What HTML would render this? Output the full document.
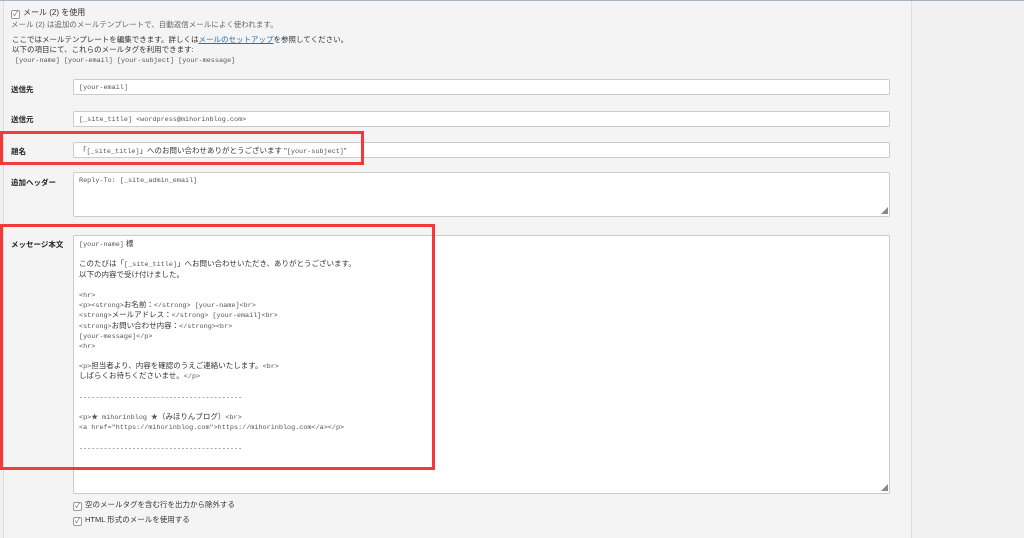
<!DOCTYPE html>
<html><head><meta charset="utf-8"><style>
*{box-sizing:border-box;margin:0;padding:0}
body{width:1024px;height:538px;overflow:hidden;background:#f1f1f1;font-family:"Liberation Sans","Noto Sans CJK JP",sans-serif;color:#333;position:relative}
.top{position:absolute;left:0;top:0;width:1024px;height:1px;background:#a8b4bf}
.panel{position:absolute;left:3px;top:1px;width:909px;height:537px;background:#f4f4f4;border-left:1px solid #ddd;border-right:1px solid #ddd}
.t{position:absolute;font-size:7.5px;white-space:nowrap;line-height:10px}
.m{font-family:"Liberation Mono","Noto Sans CJK JP",monospace;font-size:6.8px;color:#555}
.lab{position:absolute;left:11px;font-size:7.5px;font-weight:bold;color:#222}
.in{position:absolute;left:73px;width:817px;background:#fff;border:1px solid #ccc;border-radius:2px}
.in .t{left:5px}
.cb{display:inline-block;width:9px;height:9px;border:1px solid #999;border-radius:2px;background:#fff;vertical-align:-1px;margin-right:3px;font-size:7px;line-height:7px;text-align:center;color:#555}
.red{position:absolute;border:3px solid #f23a3a}
.grip{position:absolute;right:1px;bottom:1px;font-size:7px;color:#888;line-height:7px}
.ln{height:10.2px;line-height:10.2px;overflow:visible;white-space:nowrap}
a{color:#2271b1}
</style></head><body>
<div class="top"></div>
<div class="panel"></div>
<div class="t" style="left:11px;top:8px;font-size:8px"><span class="cb">✓</span>メール (2) を使用</div>
<div class="t" style="left:11px;top:20px;color:#666">メール (2) は追加のメールテンプレートで、自動返信メールによく使われます。</div>
<div class="t" style="left:12px;top:35px">ここではメールテンプレートを編集できます。詳しくは<a><u>メールのセットアップ</u></a>を参照してください。</div>
<div class="t" style="left:12px;top:45px">以下の項目にて、これらのメールタグを利用できます:</div>
<div class="t m" style="left:15px;top:56px">[your-name] [your-email] [your-subject] [your-message]</div>

<div class="lab" style="top:84px">送信先</div>
<div class="in" style="top:79px;height:16px"><div class="t m" style="top:3px">[your-email]</div></div>
<div class="lab" style="top:114px">送信元</div>
<div class="in" style="top:111px;height:16px"><div class="t m" style="top:3px">[_site_title] &lt;wordpress@mihorinblog.com&gt;</div></div>
<div class="lab" style="top:146px">題名</div>
<div class="in" style="top:142px;height:16px"><div class="t" style="top:3px;font-size:7.5px">「<span class="m">[_site_title]</span>」へのお問い合わせありがとうございます "<span class="m">[your-subject]</span>"</div></div>
<div class="lab" style="top:177px">追加ヘッダー</div>
<div class="in" style="top:172px;height:45px"><div class="t m" style="top:3px">Reply-To: [_site_admin_email]</div><div class="grip">◢</div></div>
<div class="lab" style="top:239px">メッセージ本文</div>
<div class="in" style="top:235px;height:259px"><div class="grip">◢</div>
<div class="t" style="top:3px;font-size:7.5px">
<div class="ln"><span class="m">[your-name]</span> 様</div>
<div class="ln"></div>
<div class="ln">このたびは「<span class="m">[_site_title]</span>」へお問い合わせいただき、ありがとうございます。</div>
<div class="ln">以下の内容で受け付けました。</div>
<div class="ln"></div>
<div class="ln"><span class="m">&lt;hr&gt;</span></div>
<div class="ln"><span class="m">&lt;p&gt;&lt;strong&gt;</span>お名前：<span class="m">&lt;/strong&gt; [your-name]&lt;br&gt;</span></div>
<div class="ln"><span class="m">&lt;strong&gt;</span>メールアドレス：<span class="m">&lt;/strong&gt; [your-email]&lt;br&gt;</span></div>
<div class="ln"><span class="m">&lt;strong&gt;</span>お問い合わせ内容：<span class="m">&lt;/strong&gt;&lt;br&gt;</span></div>
<div class="ln"><span class="m">[your-message]&lt;/p&gt;</span></div>
<div class="ln"><span class="m">&lt;hr&gt;</span></div>
<div class="ln"></div>
<div class="ln"><span class="m">&lt;p&gt;</span>担当者より、内容を確認のうえご連絡いたします。<span class="m">&lt;br&gt;</span></div>
<div class="ln">しばらくお待ちくださいませ。<span class="m">&lt;/p&gt;</span></div>
<div class="ln"></div>
<div class="ln"><span class="m">----------------------------------------</span></div>
<div class="ln"></div>
<div class="ln"><span class="m">&lt;p&gt;★ mihorinblog ★</span>（みほりんブログ）<span class="m">&lt;br&gt;</span></div>
<div class="ln"><span class="m">&lt;a href="https://mihorinblog.com"&gt;https://mihorinblog.com&lt;/a&gt;&lt;/p&gt;</span></div>
<div class="ln"></div>
<div class="ln"><span class="m">----------------------------------------</span></div>
</div></div>
<div class="t" style="left:73px;top:500px;font-size:7.5px"><span class="cb">✓</span>空のメールタグを含む行を出力から除外する</div>
<div class="t" style="left:73px;top:515px;font-size:7.5px"><span class="cb">✓</span>HTML 形式のメールを使用する</div>

<div class="red" style="left:0;top:131px;width:364px;height:34px"></div>
<div class="red" style="left:0;top:224px;width:435px;height:246px"></div>
</body></html>
